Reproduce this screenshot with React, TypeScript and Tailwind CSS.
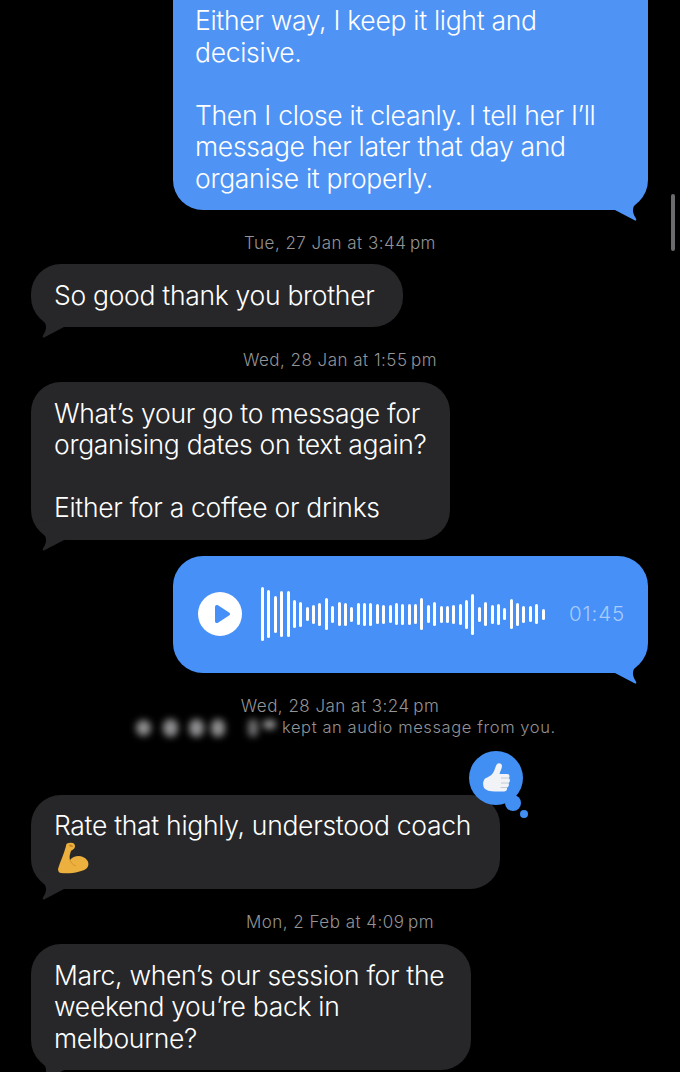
import React from 'react';

const font = { fontFamily: 'Inter, "Liberation Sans", sans-serif' };

const bars = [
  54, 48, 37, 46, 46, 28, 25, 14, 19, 23, 32, 17, 24, 23, 15, 22, 23, 23, 20, 19, 18, 22, 21, 21, 20, 32, 18, 24, 17, 17,
  19, 21, 29, 41, 15, 24, 19, 21, 12, 30, 23, 17, 16, 20, 11,
];

function Tail({ side, color }: { side: 'left' | 'right'; color: string }) {
  return (
    <svg
      width="36"
      height="30"
      viewBox="0 0 36 30"
      className={side === 'right' ? 'absolute right-0 bottom-[-11px]' : 'absolute left-0 bottom-[-11px] -scale-x-100'}
    >
      <path d="M0 19 L3 19 L23 29.5 C24.5 30 24.5 28.5 24 27.5 C21 23 20 19 22 15 C25 12 28 9 31 1 L20 0 Z" fill={color} />
    </svg>
  );
}

function Time({ children, className }: { children: React.ReactNode; className: string }) {
  return <div className={`text-center text-[17px] font-[350] leading-[22px] tracking-[0.48px] text-[#949496] ${className}`}>{children}</div>;
}

function Gray({ text, width, className }: { text: React.ReactNode; width: string; className?: string }) {
  return (
    <div className={`relative self-start ml-[31px] rounded-[30px] bg-[#27272a] pl-[23px] py-[15.75px] text-[26.5px] font-[350] leading-[31.5px] tracking-[-0.3px] text-white ${width} ${className ?? ''}`}>
      {text}
      <Tail side="left" color="#27272a" />
    </div>
  );
}

function Biceps() {
  return (
    <svg width="32" height="32" viewBox="0 0 32 32" className="block">
      <path d="M12 1 C15 0 18 1 18 4 C18 7 15 8 14 9 C13 12 12 15 13 18 C16 14 22 13 26 15 C31 17 33 22 30 26 C26 30 14 32 4 31 C2 31 1 29 1 27 C3 20 7 12 9 4 C9 2 10 1 12 1 Z" fill="#ecb03e" />
      <path d="M12 3 C14 2 16 3 16 5 C14 5 12 5 12 3 Z" fill="#c98a25" />
      <path d="M13 18 C14 21 16 23 19 24" fill="none" stroke="#d4942c" strokeWidth="1" />
    </svg>
  );
}

function Reaction() {
  return (
    <div className="absolute right-[-27px] top-[-44px] h-[70px] w-[58px]">
      <div className="absolute left-0 top-0 flex h-[54px] w-[54px] items-center justify-center rounded-full bg-[#428ff3]">
        <svg width="27" height="29" viewBox="0 0 27 29">
          <path d="M14 1 C16 -0.5 19 0.5 19 3 C19 6 17 8 16.5 11 L24 11 C26.5 11 27 13 26 15 C27.5 17 27 19 25.5 20 C26.5 22 25.5 24 24 24.5 C24.5 27 23 28.5 21 28.5 L12 28.5 C7 28.5 3 27.5 1 25 C-0.5 21 0 18 2 15.5 C5 14 8 13 10 10 C12 7 12 4 14 1 Z" fill="#f1f3f7" />
          <path d="M18 15 L26 15 M18 20 L25.5 20 M17.5 24.5 L24 24.5" stroke="#c2cad6" strokeWidth="1" />
        </svg>
      </div>
      <div className="absolute left-[36px] top-[44px] h-[16px] w-[16px] rounded-full bg-[#428ff3]" />
      <div className="absolute left-[51px] top-[59px] h-[8px] w-[8px] rounded-full bg-[#428ff3]" />
    </div>
  );
}

export default function App() {
  return (
    <div className="relative flex h-[1072px] w-[680px] flex-col overflow-hidden bg-black" style={font}>
      {/* top bubble is cut off by the screen */}
      <div className="relative ml-[173px] mt-[-40px] w-[475px] rounded-[30px] bg-[#4f94f5] pb-[16px] pl-[22px] pt-[45px] text-[26.5px] font-[350] leading-[31.5px] tracking-[-0.3px] text-white">
        Either way, I keep it light and
        <br />
        decisive.
        <br />
        <br />
        Then I close it cleanly. I tell her I’ll
        <br />
        message her later that day and
        <br />
        organise it properly.
        <Tail side="right" color="#4f94f5" />
      </div>

      <Time className="mt-[22px]">Tue, 27 Jan at 3:44{'\u202f'}pm</Time>
      <Gray className="mt-[10px]" width="w-[372px]" text="So good thank you brother" />

      <Time className="mt-[22px]">Wed, 28 Jan at 1:55{'\u202f'}pm</Time>
      <Gray
        className="mt-[11px]"
        width="w-[419px]"
        text={
          <>
            What’s your go to message for
            <br />
            organising dates on text again?
            <br />
            <br />
            Either for a coffee or drinks
          </>
        }
      />

      <div className="relative ml-[173px] mt-[16px] flex h-[117px] w-[475px] items-center rounded-[30px] bg-[#4690f8] pl-[25px]">
        <div className="flex h-[44px] w-[44px] items-center justify-center rounded-full bg-white">
          <svg width="18" height="20" viewBox="0 0 18 20" className="ml-[4px]">
            <path d="M2 3 C2 1 3.5 0.5 5 1.2 L16 8.4 C17.4 9.3 17.4 10.7 16 11.6 L5 18.8 C3.5 19.5 2 19 2 17 Z" fill="#4690f8" />
          </svg>
        </div>
        <div className="ml-[19px] flex h-[56px] w-[284px] items-center justify-between">
          {bars.map((h, i) => (
            <div key={i} className="w-[3px] rounded-full bg-white" style={{ height: h }} />
          ))}
        </div>
        <div className="ml-[24px] text-[20.5px] font-[350] tracking-[0.9px] text-[#a9cbfb]">01:45</div>
        <Tail side="right" color="#4690f8" />
      </div>

      <Time className="mt-[22px]">Wed, 28 Jan at 3:24{'\u202f'}pm</Time>
      <div className="flex h-[22px] items-center pl-[136px] text-[16.5px] font-[350] tracking-[0.6px] text-[#949496]">
        {/* blurred contact name */}
        <div className="flex w-[146px] items-center blur-[3.5px]">
          <span className="h-[16px] w-[15px] rounded-full bg-[#8e8e90]" />
          <span className="ml-[12px] h-[18px] w-[15px] rounded-full bg-[#8e8e90]" />
          <span className="ml-[11px] h-[18px] w-[15px] rounded-full bg-[#8e8e90]" />
          <span className="ml-[6.5px] h-[18px] w-[14px] rounded-full bg-[#8e8e90]" />
          <span className="ml-[23px] h-[18px] w-[10px] rounded-full bg-[#707072]" />
          <span className="ml-[5.5px] mb-[6px] h-[9px] w-[13px] rounded-full bg-[#9a9a9c]" />
        </div>
        kept an audio message from you.
      </div>

      <div className="relative ml-[31px] mt-[56px] w-[469px] self-start rounded-[30px] bg-[#27272a] py-[15.75px] pl-[23px] text-[26.5px] font-[350] leading-[31.5px] tracking-[-0.3px] text-white">
        Rate that highly, understood coach
        <div className="ml-[3px] h-[31.5px]">
          <Biceps />
        </div>
        <Tail side="left" color="#27272a" />
        <Reaction />
      </div>

      <Time className="mt-[22px]">Mon, 2 Feb at 4:09{'\u202f'}pm</Time>
      <Gray
        className="mt-[11px]"
        width="w-[440px]"
        text={
          <>
            Marc, when’s our session for the
            <br />
            weekend you’re back in
            <br />
            melbourne?
          </>
        }
      />

      {/* scroll indicator */}
      <div className="absolute right-[5px] top-[194px] h-[57px] w-[4px] rounded-full bg-[#6b6b6e]" />
    </div>
  );
}
